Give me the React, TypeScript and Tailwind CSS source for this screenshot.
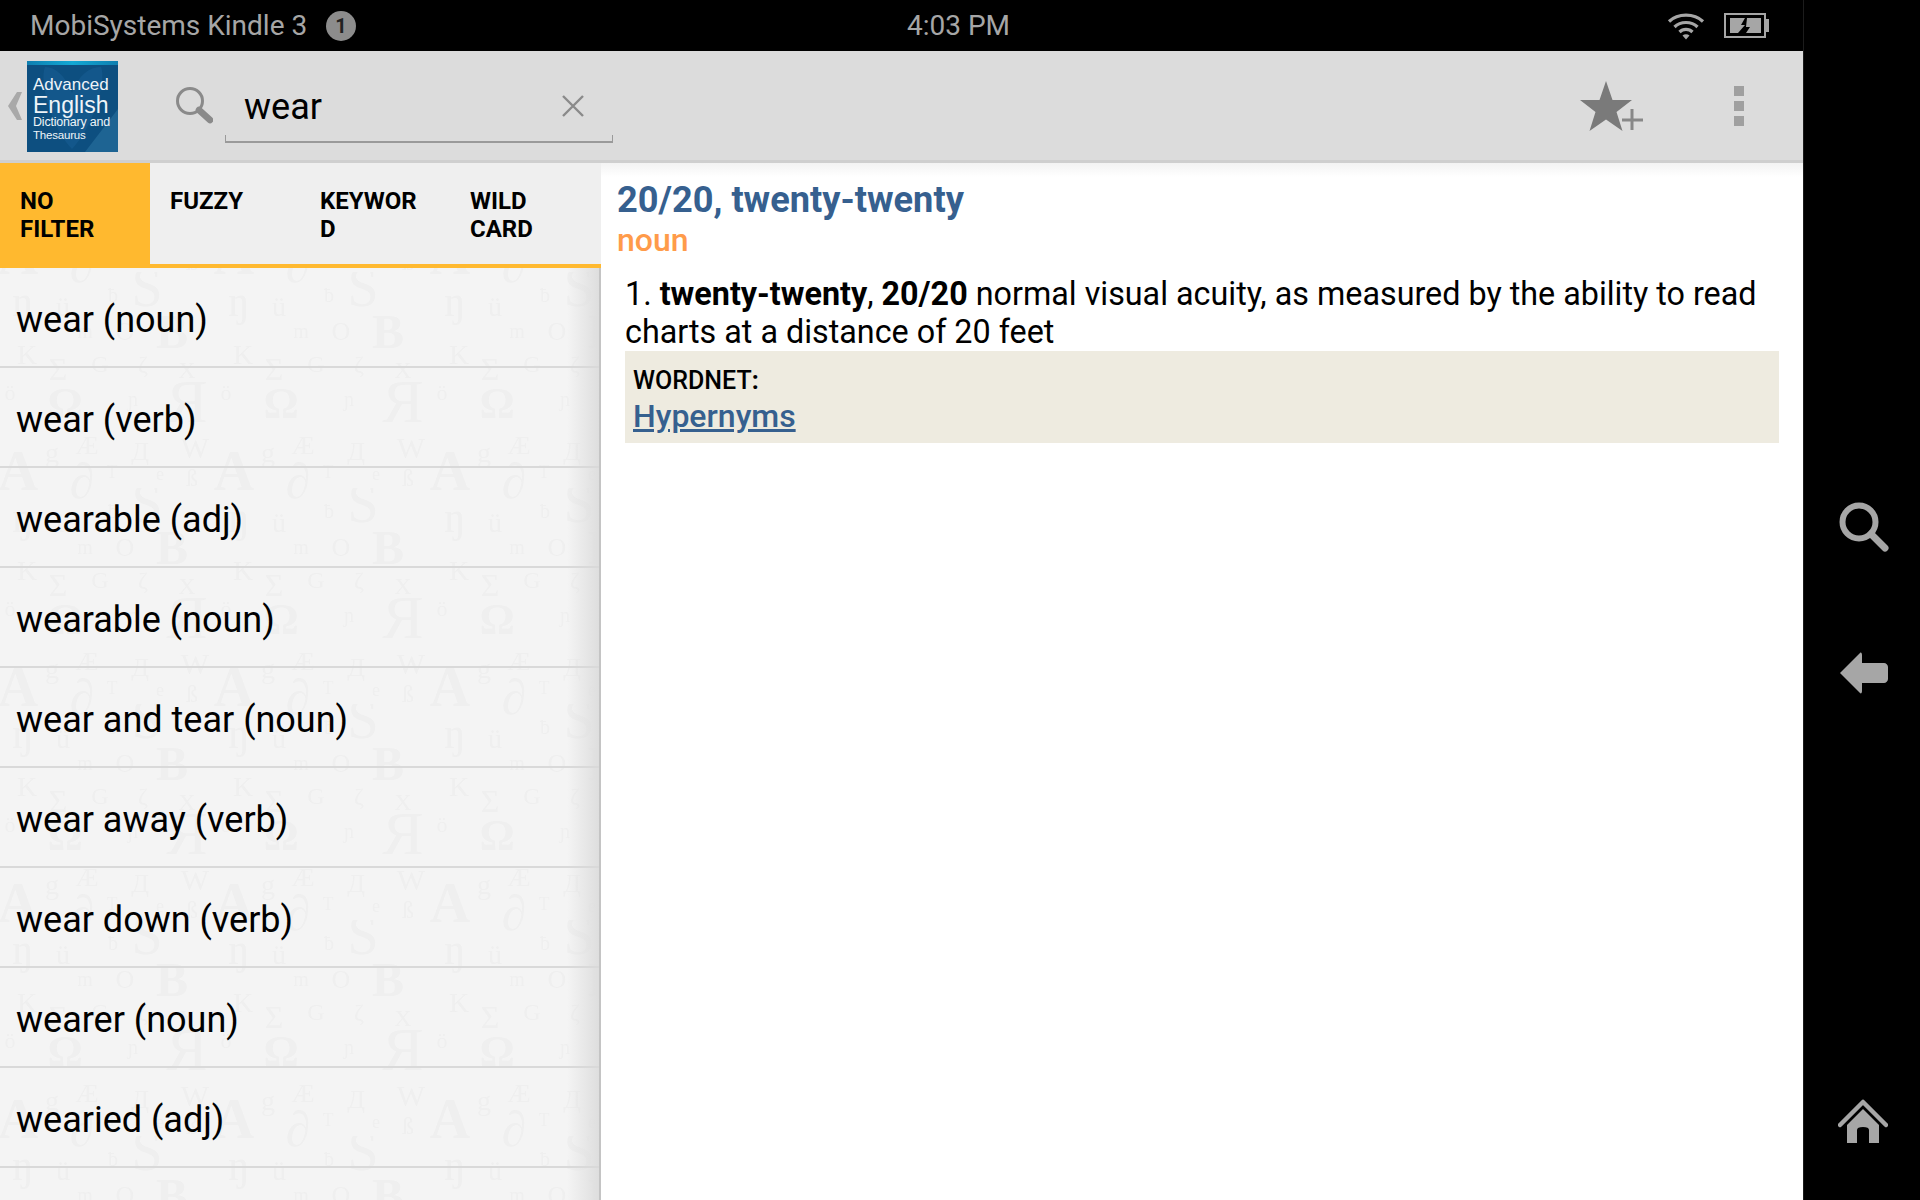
import React from "react";

const WORDS = [
  "wear (noun)",
  "wear (verb)",
  "wearable (adj)",
  "wearable (noun)",
  "wear and tear (noun)",
  "wear away (verb)",
  "wear down (verb)",
  "wearer (noun)",
  "wearied (adj)",
];

// letters of the list background, one tile of 216 x 216
const GLYPHS: [string, number, number, number, boolean?][] = [
  ["S", 147, 34, 56],
  ["ƀ", 113, 30, 20],
  ["ŋ", 23, 44, 44],
  ["ü", 63, 44, 28],
  ["m", 85, 66, 20],
  ["O", 125, 68, 26],
  ["B", 172, 76, 48, true],
  ["K", 27, 92, 28],
  ["Σ", 58, 108, 32],
  ["G", 100, 100, 24],
  ["ζ", 143, 100, 24],
  ["X", 187, 106, 24],
  ["ö", 10, 128, 22],
  ["Ω", 65, 146, 44, true],
  ["ɲ", 133, 134, 20],
  ["Я", 187, 150, 62],
  ["g", 52, 190, 28],
  ["Æ", 87, 182, 26],
  ["Д", 140, 188, 26],
  ["W", 195, 186, 30],
  ["A", 18, 218, 56, true],
  ["T", 112, 206, 18],
  ["e", 160, 208, 18],
  ["ß", 192, 214, 24],
  ["∂", 82, 226, 50],
];

const OFFSETS = [
  [0, 0],
  [-216, 0],
  [216, 0],
  [0, -216],
  [-216, -216],
  [216, -216],
];

const Watermark = () => (
  <svg className="absolute inset-0 h-full w-full" aria-hidden="true">
    <defs>
      <pattern id="letters" width="216" height="216" patternUnits="userSpaceOnUse" y="4">
        {OFFSETS.map(([dx, dy]) => (
          <g key={`${dx}_${dy}`} transform={`translate(${dx} ${dy})`}>
            {GLYPHS.map(([ch, x, y, size, bold]) => (
              <text
                key={ch}
                x={x}
                y={y}
                fontSize={size}
                textAnchor="middle"
                fill="#efefef"
                fontWeight={bold ? 700 : 400}
                fontFamily="'Liberation Serif', serif"
              >
                {ch}
              </text>
            ))}
          </g>
        ))}
      </pattern>
    </defs>
    <rect width="100%" height="100%" fill="url(#letters)" />
  </svg>
);

const Logo = () => (
  <div className="relative ml-[5px] mt-[1px] h-[91px] w-[91px] shrink-0 overflow-hidden bg-[#0d4f80] font-['Liberation_Sans',sans-serif] text-[#eef4f8]">
    <div className="h-[4px] bg-gradient-to-r from-[#0f7fb0] via-[#12a8d4] to-[#0f7fb0]" />
    <svg className="absolute inset-0" width="91" height="91" viewBox="0 0 91 91">
      <path d="M18 6c10 0 20 8 27 26C52 14 62 6 74 6c6 14-8 60-29 82C24 66 12 20 18 6Z" fill="#175e93" opacity="0.6" />
      <path d="M91 48 58 91h33Z" fill="#2f79a6" opacity="0.5" />
    </svg>
    <div className="relative whitespace-nowrap pl-[6px] pt-[12px]">
      <div className="text-[17px] leading-[16px]">Advanced</div>
      <div className="text-[23px] leading-[24px]">English</div>
      <div className="text-[12.5px] leading-[11px] tracking-[-0.2px]">Dictionary and</div>
      <div className="text-[11.5px] leading-[14px] tracking-[-0.2px]">Thesaurus</div>
    </div>
  </div>
);

const Tab = ({ lines, active }: { lines: string[]; active?: boolean }) => (
  <div className={`w-[150px] pl-[20px] pt-[24px] text-[24px] font-bold leading-[28px] text-black ${active ? "h-[105px] bg-[#ffb92f]" : "h-[101px]"}`}>
    {lines.map((l) => (
      <div key={l}>{l}</div>
    ))}
  </div>
);

export default function App() {
  return (
    <div className="flex h-[1200px] w-[1920px] overflow-hidden bg-black font-['Roboto',sans-serif]">
      <div className="flex w-[1803px] shrink-0 flex-col">
        {/* status bar */}
        <div className="flex h-[51px] shrink-0 items-center bg-black pl-[30px] text-[28px] text-[#a6a6a6]">
          <span className="mt-[1px] w-[296px] whitespace-nowrap">MobiSystems Kindle 3</span>
          <span className="flex h-[30px] w-[30px] items-center justify-center rounded-full bg-[#8c8c8c] text-[20px] font-bold text-[#222]">1</span>
          <span className="ml-[551px] mt-[1px] w-[760px] whitespace-nowrap">4:03 PM</span>
          <svg width="38" height="28" viewBox="0 0 38 28">
            <g fill="none" stroke="#a6a6a6" strokeWidth="3.2">
              <path d="M2 9.5C11 1 27 1 36 9.5" />
              <path d="M7.5 15C13.5 9 24.5 9 30.5 15" />
              <path d="M12.5 20C16 16.5 22 16.5 25.5 20" />
            </g>
            <path d="M15.5 23.5c2-1.6 5-1.6 7 0L19 27.5Z" fill="#a6a6a6" />
          </svg>
          <svg width="46" height="25" viewBox="0 0 46 25" className="ml-[19px]">
            <rect x="1" y="1" width="40" height="23" fill="none" stroke="#a6a6a6" strokeWidth="2" />
            <rect x="42" y="6" width="3" height="13" fill="#a6a6a6" />
            <path d="M6 5h15l-4 7h4L14 20H6Z M23 5h14v15H22l4-6h-4Z" fill="#a6a6a6" />
          </svg>
        </div>

        {/* action bar */}
        <div className="flex h-[109px] shrink-0 items-center bg-[#dcdcdc]">
          <svg width="14" height="28" viewBox="0 0 14 28" className="ml-[8px] mt-[1px]">
            <path d="M9 0h5L8 14l6 14H9L0 14Z" fill="#a9a9a9" />
          </svg>
          <Logo />
          <svg width="38" height="38" viewBox="0 0 38 38" className="ml-[57px] mb-[1px]">
            <circle cx="15" cy="15" r="12.5" fill="none" stroke="#8a8a8a" strokeWidth="3" />
            <path d="M24 24 35 34" stroke="#8a8a8a" strokeWidth="6.5" strokeLinecap="round" />
          </svg>
          <div className="relative ml-[12px] mt-[1px] flex h-[74px] w-[388px] items-center border-b-2 border-x border-[#9a9a9a] [border-image:linear-gradient(to_top,#9a9a9a_7px,transparent_7px)_1]">
            <span className="ml-[18px] mt-[3px] text-[36px] text-black">wear</span>
            <svg width="24" height="24" viewBox="0 0 24 24" className="absolute left-[335px] top-[25px]">
              <path d="M2 2 22 22M22 2 2 22" stroke="#8a8a8a" strokeWidth="2.4" />
            </svg>
          </div>
          <svg width="66" height="62" viewBox="0 0 66 62" className="ml-[966px] mt-[13px]">
            <path d="M27 0 33.5 19 53 19 37.5 31 43.5 50 27 38.5 10.5 50 16.5 31 1 19 20.5 19Z" fill="#7a7a7a" />
            <path d="M53 28V49M43 39H64" stroke="#888" strokeWidth="3" />
          </svg>
          <div className="ml-[89px] flex flex-col gap-[5px]">
            <div className="h-[10px] w-[10px] bg-[#a0a0a0]" />
            <div className="h-[10px] w-[10px] bg-[#a0a0a0]" />
            <div className="h-[10px] w-[10px] bg-[#a0a0a0]" />
          </div>
        </div>
        <div className="h-[3px] shrink-0 bg-[#cfcfcf]" />

        <div className="flex min-h-0 flex-1">
          {/* word list */}
          <div className="flex w-[601px] shrink-0 flex-col">
            <div className="flex h-[105px] shrink-0 items-start border-b-4 border-[#ffb92f] bg-[#efefef]">
              <Tab lines={["NO", "FILTER"]} active />
              <Tab lines={["FUZZY"]} />
              <Tab lines={["KEYWOR", "D"]} />
              <Tab lines={["WILD", "CARD"]} />
            </div>
            <div className="relative flex-1 overflow-hidden border-r-2 border-[#c4c4c4] bg-[#f4f4f4]">
              <Watermark />
              <div className="absolute inset-y-0 right-0 w-[32px] bg-gradient-to-r from-transparent to-[#dedede]" />
              <div className="relative">
                {WORDS.map((w) => (
                  <div key={w} className="flex h-[100px] items-center border-b-2 border-[#d9d9d9] pl-[16px] pt-[6px] text-[36px] text-black">
                    {w}
                  </div>
                ))}
              </div>
            </div>
          </div>

          {/* article */}
          <div className="flex-1 bg-white bg-gradient-to-b from-[#f3f3f3] from-0% to-white to-[14px] bg-no-repeat pl-[16px] pr-[24px] pt-[14px]">
            <h1 className="text-[36.2px] font-bold leading-[46px] text-[#36608f]">20/20, twenty-twenty</h1>
            <div className="-mt-[2px] text-[32px] font-medium leading-[38px] text-[#ff9b4a]">noun</div>
            <p className="ml-[8px] mt-[16px] whitespace-nowrap text-[32.3px] leading-[38px] text-black">
              1. <b>twenty-twenty</b>, <b>20/20</b> normal visual acuity, as measured by the ability to read
              <br />
              charts at a distance of 20 feet
            </p>
            <div className="ml-[8px] h-[92px] bg-[#eeebe0] px-[8px] pt-[12px]">
              <div className="text-[25px] font-medium leading-[35px] text-black">
                WORDNET<span className="font-bold">:</span>
              </div>
              <a className="text-[32px] font-medium leading-[37px] text-[#36608f] underline">Hypernyms</a>
            </div>
          </div>
        </div>
      </div>

      {/* system bar */}
      <div className="flex flex-1 flex-col items-center border-l border-[#1c1c1c] pl-[4px]">
        <svg width="50" height="50" viewBox="0 0 50 50" className="mt-[502px]">
          <circle cx="20" cy="20" r="16.5" fill="none" stroke="#a6a6a6" strokeWidth="6" />
          <path d="M32 32 46 46" stroke="#a6a6a6" strokeWidth="7" strokeLinecap="round" />
        </svg>
        <svg width="50" height="42" viewBox="0 0 50 42" className="mt-[100px]">
          <path d="M21 1c1-1 2 0 2 2v8h22c2 0 4 2 4 4v12c0 2-2 4-4 4H23v8c0 2-1 3-2 2L1 21Z" fill="#a6a6a6" />
        </svg>
        <svg width="50" height="46" viewBox="0 0 50 46" className="mr-[2px] mt-[405px]">
          <path d="M2 26 25 3l23 23" fill="none" stroke="#a6a6a6" strokeWidth="4.5" strokeLinecap="round" strokeLinejoin="round" />
          <path d="M9 44V26L25 10l16 16v18H31V31c0-2-2-3-6-3s-6 1-6 3v13Z" fill="#a6a6a6" />
        </svg>
      </div>
    </div>
  );
}
